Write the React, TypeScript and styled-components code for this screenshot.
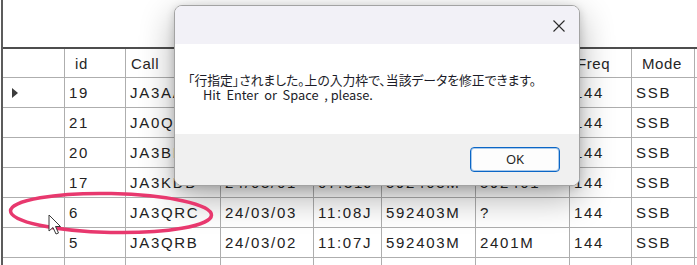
import React from "react";
import styled, { createGlobalStyle } from "styled-components";

const GlobalStyle = createGlobalStyle`
  html, body {
    margin: 0;
    padding: 0;
    background: #fff;
  }
`;

const Frame = styled.div`
  position: relative;
  width: 696px;
  height: 265px;
  margin-left: 1px;
  overflow: hidden;
  border-left: 2px solid #5c5c5c;
  background: #fff;
  box-sizing: border-box;
  font-family: "Liberation Sans", Arial, sans-serif;
`;

const TopSpace = styled.div`
  height: 47px;
`;

const Grid = styled.div`
  display: grid;
  grid-template-columns: 61px 60px 94px 92px 67px 93px 93px 61px 62px 1fr;
  grid-template-rows: 28px;
  grid-auto-rows: 29px;
  gap: 1px;
  background: #aeaeae;
  border-top: 2px solid #4e4e4e;
`;

const HeadCell = styled.div<{ $pad: number }>`
  display: flex;
  align-items: center;
  padding-left: ${(p) => p.$pad}px;
  background: #fff;
  color: #262626;
  font-size: 15px;
  letter-spacing: 0.6px;
  white-space: nowrap;
  overflow: hidden;
`;

const Cell = styled.div`
  display: flex;
  align-items: center;
  padding-left: 4px;
  background: #fff;
  color: #222;
  font-size: 15px;
  letter-spacing: 1.7px;
  white-space: nowrap;
  overflow: hidden;
`;

const RowHead = styled.div`
  display: flex;
  align-items: center;
  padding-left: 9px;
  background: #fff;
`;

const Pointer = styled.span`
  width: 0;
  height: 0;
  border-left: 6px solid #3c3c3c;
  border-top: 5px solid transparent;
  border-bottom: 5px solid transparent;
`;

const Dialog = styled.div`
  position: absolute;
  left: 171px;
  top: 5px;
  width: 406px;
  height: 181px;
  display: flex;
  flex-direction: column;
  border: 1px solid #a3a3a3;
  border-radius: 8px;
  overflow: hidden;
  box-sizing: border-box;
  background: #fff;
  box-shadow: 0 12px 34px rgba(0, 0, 0, 0.32), 0 2px 8px rgba(0, 0, 0, 0.16);
`;

const TitleBar = styled.div`
  height: 38px;
  display: flex;
  align-items: center;
  justify-content: flex-end;
  padding-right: 14px;
  background: #f2f1f7;
`;

const CloseIcon = styled.svg`
  width: 12px;
  height: 12px;
  margin-top: 2px;
`;

const Body = styled.div`
  height: 90px;
  box-sizing: border-box;
  padding: 28px 0 0 13px;
  background: #fff;
  font-family: "Noto Sans CJK JP", "Noto Sans", sans-serif;
  font-size: 12.8px;
  line-height: 15px;
  color: #1c1c28;
  font-feature-settings: "palt";
`;

const Line = styled.div<{ $indent?: number }>`
  padding-left: ${(p) => p.$indent ?? 0}px;
  white-space: pre;
`;

const Footer = styled.div`
  flex: 1;
  display: flex;
  align-items: center;
  justify-content: flex-end;
  padding-right: 19px;
  background: #f0f0f0;
`;

const OkButton = styled.button`
  width: 90px;
  height: 25px;
  margin-top: -1px;
  border: 1px solid #0b66c6;
  box-shadow: inset 0 0 0 1px rgba(11, 102, 198, 0.35);
  border-radius: 4px;
  background: #fdfdfd;
  color: #1f1f1f;
  font-family: "Noto Sans", sans-serif;
  font-size: 13px;
  padding: 0;
`;

const Overlay = styled.svg`
  position: absolute;
  left: -3px;
  top: 0;
  width: 697px;
  height: 265px;
  pointer-events: none;
`;

// header labels hidden under the dialog are left empty
const headers: [string, number][] = [
  ["", 0],
  ["id", 10],
  ["Call", 5],
  ["", 5],
  ["", 5],
  ["", 5],
  ["", 5],
  ["Freq", 7],
  ["Mode", 10],
  ["", 0],
];

const rows = [
  ["19", "JA3AA", "", "", "", "", "144", "SSB"],
  ["21", "JA0QD", "", "", "", "", "144", "SSB"],
  ["20", "JA3BI", "", "", "", "", "144", "SSB"],
  ["17", "JA3KDD", "24/03/01", "07:31J", "592403M", "592401", "144", "SSB"],
  ["6", "JA3QRC", "24/03/03", "11:08J", "592403M", "?", "144", "SSB"],
  ["5", "JA3QRB", "24/03/02", "11:07J", "592403M", "2401M", "144", "SSB"],
  ["", "", "", "", "", "", "", ""],
];

export default function App() {
  return (
    <>
      <GlobalStyle />
      <Frame>
        <TopSpace />
        <Grid>
          {headers.map(([h, pad], i) => (
            <HeadCell key={`h${i}`} $pad={pad}>
              {h}
            </HeadCell>
          ))}
          {rows.map((r, ri) => (
            <React.Fragment key={ri}>
              <RowHead>{ri === 0 && <Pointer />}</RowHead>
              {r.map((v, ci) => (
                <Cell key={ci}>{v}</Cell>
              ))}
              <Cell />
            </React.Fragment>
          ))}
        </Grid>

        <Dialog>
          <TitleBar>
            <CloseIcon viewBox="0 0 12 12">
              <path d="M0.5 0.5 L11.5 11.5 M11.5 0.5 L0.5 11.5" stroke="#2b2b2b" strokeWidth="1.1" fill="none" />
            </CloseIcon>
          </TitleBar>
          <Body>
            <Line>「行指定」されました。上の入力枠で、当該データを修正できます。</Line>
            <Line $indent={15}>Hit  Enter  or  Space  , please.</Line>
          </Body>
          <Footer>
            <OkButton>OK</OkButton>
          </Footer>
        </Dialog>

        <Overlay viewBox="0 0 697 265">
          <ellipse
            cx="111"
            cy="213"
            rx="100.5"
            ry="19.5"
            fill="none"
            stroke="#e8386e"
            strokeWidth="3.5"
            transform="rotate(1.2 111 213)"
          />
          <path
            d="M49 215 L49 231 L53 227.5 L56 234 L58.5 233 L55.5 226.5 L60.5 226.5 Z"
            fill="#fff"
            stroke="#3a3a3a"
            strokeWidth="1"
            strokeLinejoin="round"
          />
        </Overlay>
      </Frame>
    </>
  );
}
